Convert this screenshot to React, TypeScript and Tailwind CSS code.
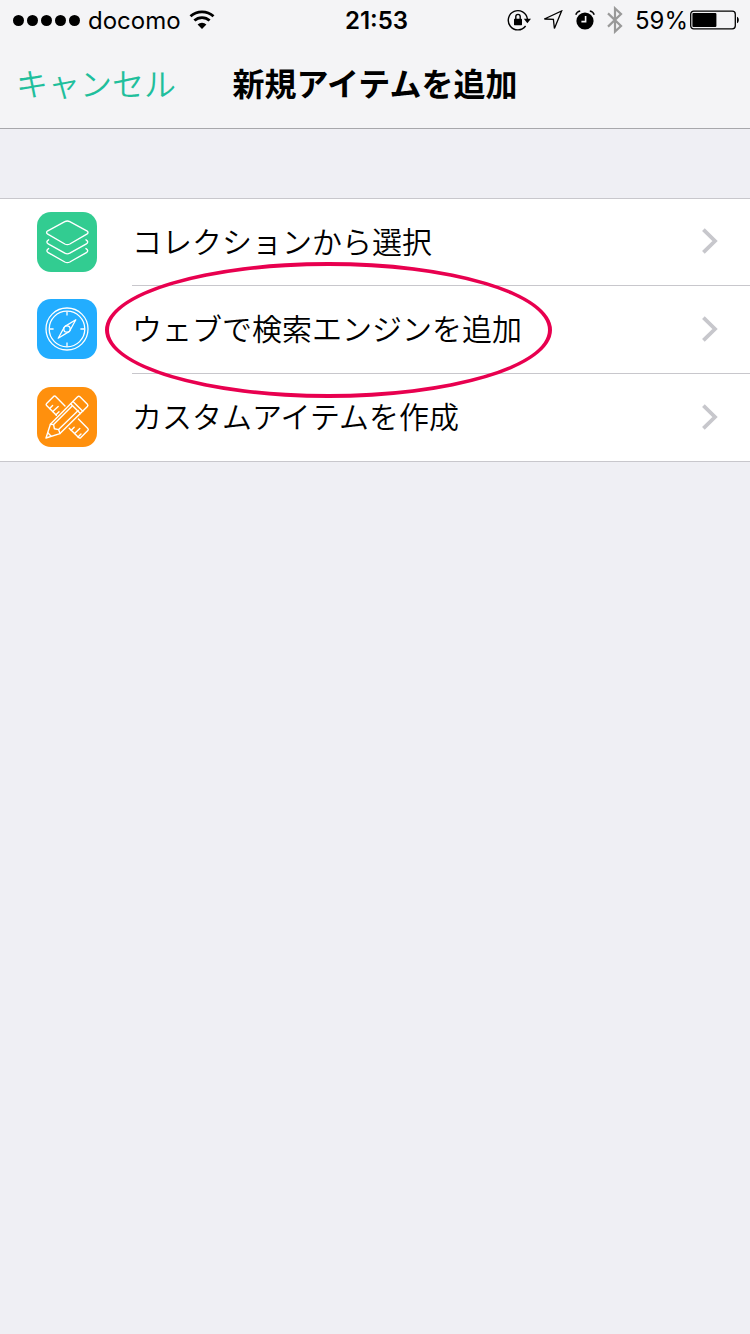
import type { ReactNode } from 'react';

function WifiIcon() {
  return (
    <svg width="26" height="20" viewBox="0 0 26 20" fill="none" stroke="#000" strokeWidth="2.8">
      <path d="M1.5 6.3A17 17 0 0 1 24.5 6.3" />
      <path d="M5.4 10.6A11 11 0 0 1 20.6 10.6" />
      <path d="M13 19 8.6 14.5A6.3 6.3 0 0 1 17.4 14.5Z" fill="#000" stroke="none" />
    </svg>
  );
}

function RotationLockIcon() {
  return (
    <svg width="24" height="22" viewBox="0 0 24 22" fill="none" stroke="#000" strokeWidth="1.4">
      <path d="M18.6 17A9.6 9.6 0 1 1 20.4 10" />
      <path d="M16.8 9.8H24L20.4 14.2Z" fill="#000" stroke="none" />
      <rect x="7" y="9.8" width="8" height="6.4" rx="0.6" fill="#000" stroke="none" />
      <path d="M8.8 10V7.6a2.2 2.2 0 0 1 4.4 0V10" />
    </svg>
  );
}

function LocationIcon() {
  return (
    <svg width="20" height="20" viewBox="0 0 20 20" fill="none" stroke="#000" strokeWidth="1.3">
      <path d="M1.4 9 18.6 1 11.4 18.4 10.4 9.4Z" />
    </svg>
  );
}

function AlarmIcon() {
  return (
    <svg width="20" height="20" viewBox="0 0 20 20" fill="none">
      <circle cx="10" cy="11" r="8.6" fill="#000" />
      <path d="M10.6 6v5.6H6.4" stroke="#f4f4f6" strokeWidth="1.6" />
      <path d="M0.8 4.8C1.4 2.6 3 1.4 5.2 1" stroke="#000" strokeWidth="1.4" />
      <path d="M19.2 4.8C18.6 2.6 17 1.4 14.8 1" stroke="#000" strokeWidth="1.4" />
    </svg>
  );
}

function BluetoothIcon() {
  return (
    <svg width="16" height="28" viewBox="0 0 16 28" fill="none" stroke="#999" strokeWidth="2.2">
      <path d="M1 7.4 14 20 8 25.6V2.4L14 8 1 20.6" />
    </svg>
  );
}

function BatteryIcon() {
  return (
    <svg width="50" height="20" viewBox="0 0 50 20" fill="none">
      <rect x="0.7" y="1.2" width="44.6" height="17.6" rx="3" stroke="#000" strokeWidth="1.3" />
      <rect x="2.4" y="3" width="24" height="14" rx="1" fill="#000" />
      <path d="M47 6.8C49.4 7.6 49.4 12.4 47 13.2Z" fill="#000" />
    </svg>
  );
}

function StackIcon() {
  return (
    <svg width="60" height="60" viewBox="0 0 60 60" fill="none" stroke="#fff" strokeWidth="1.4" strokeLinecap="round" strokeLinejoin="round">
      <path d="M27.8 9.6Q30.3 8.3 32.8 9.6L49.8 18.8Q52.2 20.5 49.8 22.2L32.8 32Q30.3 33.3 27.8 32L10.8 22.2Q8.4 20.5 10.8 18.8Z" />
      <path d="M11.6 27.8C9.4 29 9.4 30.8 11.2 31.8L27.8 41.2Q30.3 42.5 32.8 41.2L49.4 31.8C51.2 30.8 51.2 29 49 27.8" />
      <path d="M11.6 36.6C9.4 37.8 9.4 39.6 11.2 40.6L27.8 50Q30.3 51.3 32.8 50L49.4 40.6C51.2 39.6 51.2 37.8 49 36.6" />
    </svg>
  );
}

function CompassIcon() {
  return (
    <svg width="60" height="60" viewBox="0 0 60 60" fill="none" stroke="#fff" strokeWidth="1.3" strokeLinejoin="round">
      <circle cx="30" cy="30" r="21" />
      <circle cx="30" cy="30" r="17.8" />
      <circle cx="30" cy="30" r="3.2" />
      <path d="M30 12.6v4M30 43.4v4M12.6 30h4M43.4 30h4" />
      <path d="M27.2 28.2 21.2 39.2 32 32.6M28 27.4 38.8 20.8 32.8 31.8" />
    </svg>
  );
}

function PencilRulerIcon() {
  return (
    <svg width="60" height="60" viewBox="0 0 60 60" fill="none" stroke="#fff" strokeWidth="1.4" strokeLinecap="round" strokeLinejoin="round">
      <path d="M28 19 18.6 9.4Q17.6 8.6 16.6 9.4L9.6 16.4Q8.6 17.6 9.6 18.6L19.4 28.2" />
      <path d="M12.6 21.4l3-3M15.8 24.6l5.4-5.2M19 27.8l3-3" />
      <path d="M41.4 32 50.8 41.4Q51.8 42.6 50.8 43.6L43.8 50.6Q42.6 51.6 41.6 50.6L32.2 41.2" />
      <path d="M34.2 43.2l3-3M37.6 46.6l5.2-5.2M41 50l3-3" />
      <path d="M9 51 13.4 37.2 40.6 9.8Q41.8 8.8 43 9.8L50.4 17.2Q51.4 18.4 50.4 19.4L23 46.6Z" />
      <path d="M36 14.4 45.8 24.2M33.6 16.8 43.4 26.6" />
      <path d="M13.4 37.2 16.6 37.6 17.4 41.8 21.6 42.6 23 46.6" />
      <path d="M16.6 37.6 35.4 18.8M21.6 42.6 41.2 23.4M10.8 45.8 14.2 49.2" />
    </svg>
  );
}

function Chevron() {
  return (
    <svg className="shrink-0" width="18" height="28" viewBox="0 0 18 28" fill="none" stroke="#c7c7cc" strokeWidth="3.8">
      <path d="M2.4 2.6 14 14 2.4 25.4" />
    </svg>
  );
}

type Item = {
  label: string;
  color: string;
  icon: ReactNode;
  highlighted?: boolean;
};

const items: Item[] = [
  { label: 'コレクションから選択', color: 'bg-[#32cc91]', icon: <StackIcon /> },
  { label: 'ウェブで検索エンジンを追加', color: 'bg-[#22adff]', icon: <CompassIcon />, highlighted: true },
  { label: 'カスタムアイテムを作成', color: 'bg-[#ff900d]', icon: <PencilRulerIcon /> },
];

function StatusBar() {
  return (
    <div className="flex h-10 items-center font-[Inter,sans-serif] text-2xl text-black">
      <div className="flex flex-1 items-center pl-[13px]">
        <div className="flex gap-[3px]">
          {[0, 1, 2, 3, 4].map((n) => (
            <span key={n} className="size-[11px] rounded-full bg-black" />
          ))}
        </div>
        <span className="ml-2 mr-2 pt-0.5">docomo</span>
        <WifiIcon />
      </div>
      <span className="pt-0.5 font-semibold">21:53</span>
      <div className="flex flex-1 items-center justify-end pr-[10px]">
        <RotationLockIcon />
        <div className="ml-3 flex items-center gap-3">
          <LocationIcon />
          <AlarmIcon />
          <BluetoothIcon />
        </div>
        <span className="ml-3 mr-0.5 pt-0.5">59%</span>
        <BatteryIcon />
      </div>
    </div>
  );
}

export default function App() {
  return (
    <div className="min-h-screen bg-[#efeff4] font-['Noto_Sans_CJK_JP',sans-serif] text-black">
      <header className="border-b border-[#a7a7ab] bg-[#f4f4f6]">
        <StatusBar />
        <div className="flex h-[88px] items-center px-4 pb-1">
          <div className="flex-1">
            <button type="button" className="text-[32px] font-[350] text-[#1fbf9c]">キャンセル</button>
          </div>
          <h1 className="text-[32px] font-bold">新規アイテムを追加</h1>
          <div className="flex-1" />
        </div>
      </header>

      <main className="pt-[69px]">
        <ul className="border-y border-[#c8c7cc] bg-white">
          {items.map((item) => (
            <li key={item.label} className="group relative">
              <button type="button" className="flex w-full items-center pl-[37px] text-left">
                <span className={`mb-0.5 size-[60px] shrink-0 overflow-hidden rounded-[14px] ${item.color}`}>{item.icon}</span>
                <span className="ml-[35px] flex h-[88px] flex-1 items-center justify-between border-b border-[#c8c7cc] pb-0.5 pr-[31px] group-first:h-[87px] group-last:h-[87px] group-last:border-b-0">
                  <span className="pb-0.5 text-[30px] font-[350]">{item.label}</span>
                  <Chevron />
                </span>
              </button>
              {item.highlighted && (
                <span className="pointer-events-none absolute -top-6 left-[105px] z-10 h-[136px] w-[447px] rounded-[50%] border-4 border-[#e8004f]" />
              )}
            </li>
          ))}
        </ul>
      </main>
    </div>
  );
}
